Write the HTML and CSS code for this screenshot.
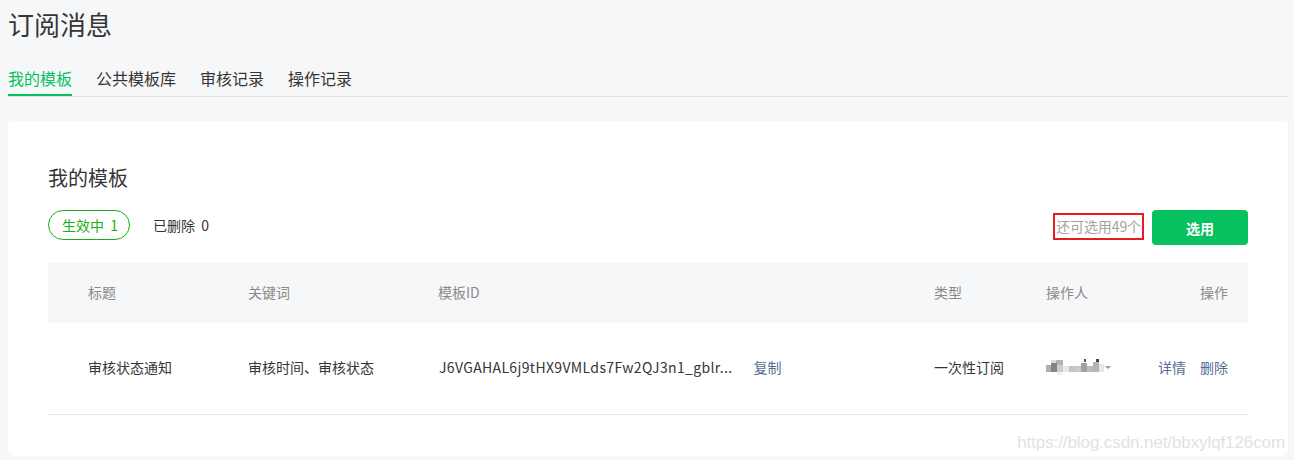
FILE: index.html
```html
<!DOCTYPE html>
<html lang="zh-CN">
<head>
<meta charset="utf-8">
<title>订阅消息</title>
<link rel="stylesheet" href="styles.css">
</head>
<body>
<div class="page">
  <h1 class="page-title">订阅消息</h1>
  <nav class="tabs">
    <a class="tab active">我的模板</a>
    <a class="tab">公共模板库</a>
    <a class="tab">审核记录</a>
    <a class="tab">操作记录</a>
  </nav>
  <section class="card">
    <h2 class="card-title">我的模板</h2>
    <div class="toolbar">
      <div class="filters">
        <span class="pill">生效中&nbsp;&nbsp;1</span>
        <span class="filter">已删除&nbsp;&nbsp;0</span>
      </div>
      <div class="actions">
        <span class="remain">还可选用49个</span>
        <button class="btn-primary">选用</button>
      </div>
    </div>
    <div class="table">
      <div class="row head">
        <div class="c c1">标题</div>
        <div class="c c2">关键词</div>
        <div class="c c3">模板ID</div>
        <div class="c c4">类型</div>
        <div class="c c5">操作人</div>
        <div class="c c6">操作</div>
      </div>
      <div class="row body">
        <div class="c c1">审核状态通知</div>
        <div class="c c2">审核时间、审核状态</div>
        <div class="c c3"><span class="tid">J6VGAHAL6j9tHX9VMLds7Fw2QJ3n1_gblr...</span><a class="link copy">复制</a></div>
        <div class="c c4">一次性订阅</div>
        <div class="c c5">
          <svg class="blur" width="66" height="18" viewBox="0 0 66 18">
            <rect x="5" y="2" width="6" height="5" fill="#dcdcdc"/>
            <rect x="10" y="2" width="7" height="5" fill="#b4b4b4"/>
            <rect x="38" y="1" width="2" height="3" fill="#555"/>
            <rect x="50" y="1" width="3" height="3" fill="#444"/>
            <rect x="0" y="7" width="5" height="7" fill="#b0b0b0"/>
            <rect x="5" y="5" width="6" height="9" fill="#848484"/>
            <rect x="11" y="7" width="6" height="7" fill="#cdcdcd"/>
            <rect x="17" y="8" width="6" height="6" fill="#e8e8e8"/>
            <rect x="23" y="8" width="6" height="6" fill="#c4c4c4"/>
            <rect x="29" y="8" width="6" height="6" fill="#cacaca"/>
            <rect x="35" y="5" width="6" height="9" fill="#a2a2a2"/>
            <rect x="41" y="8" width="6" height="6" fill="#bcbcbc"/>
            <rect x="47" y="4" width="6" height="10" fill="#b5b5b5"/>
            <rect x="53" y="6" width="5" height="8" fill="#e6e6e6"/>
            <rect x="11" y="14" width="6" height="3" fill="#f0f0f0"/>
            <path d="M59 8h6l-3 3z" fill="#999"/>
          </svg>
        </div>
        <div class="c c6"><a class="link">详情</a><a class="link">删除</a></div>
      </div>
    </div>
    <div class="watermark">https://blog.csdn.net/bbxylqf126com</div>
  </section>
</div>
</body>
</html>
```
FILE: styles.css
```css
* { box-sizing: border-box; }
html, body {
  margin: 0;
  padding: 0;
  background: #f6f7f9;
}
body {
  font-family: "Noto Sans CJK SC", "Liberation Sans", sans-serif;
  color: #353535;
  font-size: 14px;
}
.page {
  padding: 0 6px 0 8px;
}
.page-title {
  margin: 6px 0 0;
  font-size: 26px;
  line-height: 36px;
  font-weight: 400;
  color: #353535;
}
.tabs {
  display: flex;
  gap: 24px;
  margin-top: 26px;
  border-bottom: 1px solid #e1e2e5;
  height: 29px;
}
.tab {
  font-size: 16px;
  line-height: 22px;
  padding-bottom: 4px;
  margin-top: -1px;
  color: #353535;
  height: 29px;
}
.tab.active {
  color: #07c160;
  border-bottom: 2px solid #07c160;
}
.card {
  position: relative;
  margin-top: 24px;
  background: #fff;
  border-radius: 4px;
  box-shadow: 0 1px 2px rgba(0,0,0,0.06);
  padding: 43px 40px 41px;
}
.card-title {
  margin: 0;
  font-size: 20px;
  line-height: 28px;
  font-weight: 400;
  color: #353535;
}
.toolbar {
  display: flex;
  justify-content: space-between;
  align-items: flex-start;
  margin-top: 18px;
  height: 35px;
}
.filters {
  display: flex;
  align-items: center;
  gap: 23px;
  height: 30px;
}
.pill {
  display: inline-flex;
  align-items: center;
  height: 30px;
  width: 82px;
  padding-left: 13px;
  padding-bottom: 1px;
  border: 1px solid #1aad19;
  border-radius: 15px;
  color: #1aad19;
  font-size: 14px;
}
.filter {
  color: #353535;
  font-size: 14px;
  padding-bottom: 1px;
}
.actions {
  display: flex;
  align-items: center;
  gap: 8px;
}
.remain {
  display: inline-flex;
  align-items: center;
  height: 27px;
  padding: 0 1px 1px;
  margin-top: 3px;
  border: 2px solid #e51c23;
  color: #a3a3a3;
  font-size: 14px;
  letter-spacing: -0.1px;
  align-self: flex-start;
}
.btn-primary {
  width: 96px;
  height: 35px;
  border: 0;
  border-radius: 4px;
  background: #07c160;
  color: #fff;
  font-family: inherit;
  font-size: 14px;
  font-weight: 600;
}
.table {
  margin-top: 18px;
}
.row {
  display: flex;
  align-items: center;
}
.row.head {
  height: 60px;
  padding-bottom: 2px;
  background: #f6f7f9;
  color: #8a8a8a;
}
.row.body {
  height: 92px;
  padding-bottom: 3px;
  border-bottom: 1px solid #e7e7e7;
  color: #353535;
}
.c { white-space: nowrap; }
.c1 { width: 200px; padding-left: 40px; }
.c2 { width: 190px; }
.c3 { width: 496px; display: flex; align-items: center; }
.c4 { width: 112px; }
.c5 { width: 102px; display: flex; align-items: center; }
.c6 { flex: 1; text-align: right; padding-right: 20px; }
.tid {
  white-space: nowrap;
  padding-left: 1px;
  letter-spacing: 0.35px;
}
.link {
  color: #576b95;
  cursor: pointer;
}
.copy { margin-left: 21px; }
.c6 .link + .link { margin-left: 14px; }
.blur { display: block; margin-top: -1px; }
.watermark {
  position: absolute;
  right: 3px;
  bottom: 3px;
  font-family: "Liberation Sans", Arial, sans-serif;
  font-size: 17px;
  color: #e2e2e2;
  letter-spacing: -0.1px;
}
```
